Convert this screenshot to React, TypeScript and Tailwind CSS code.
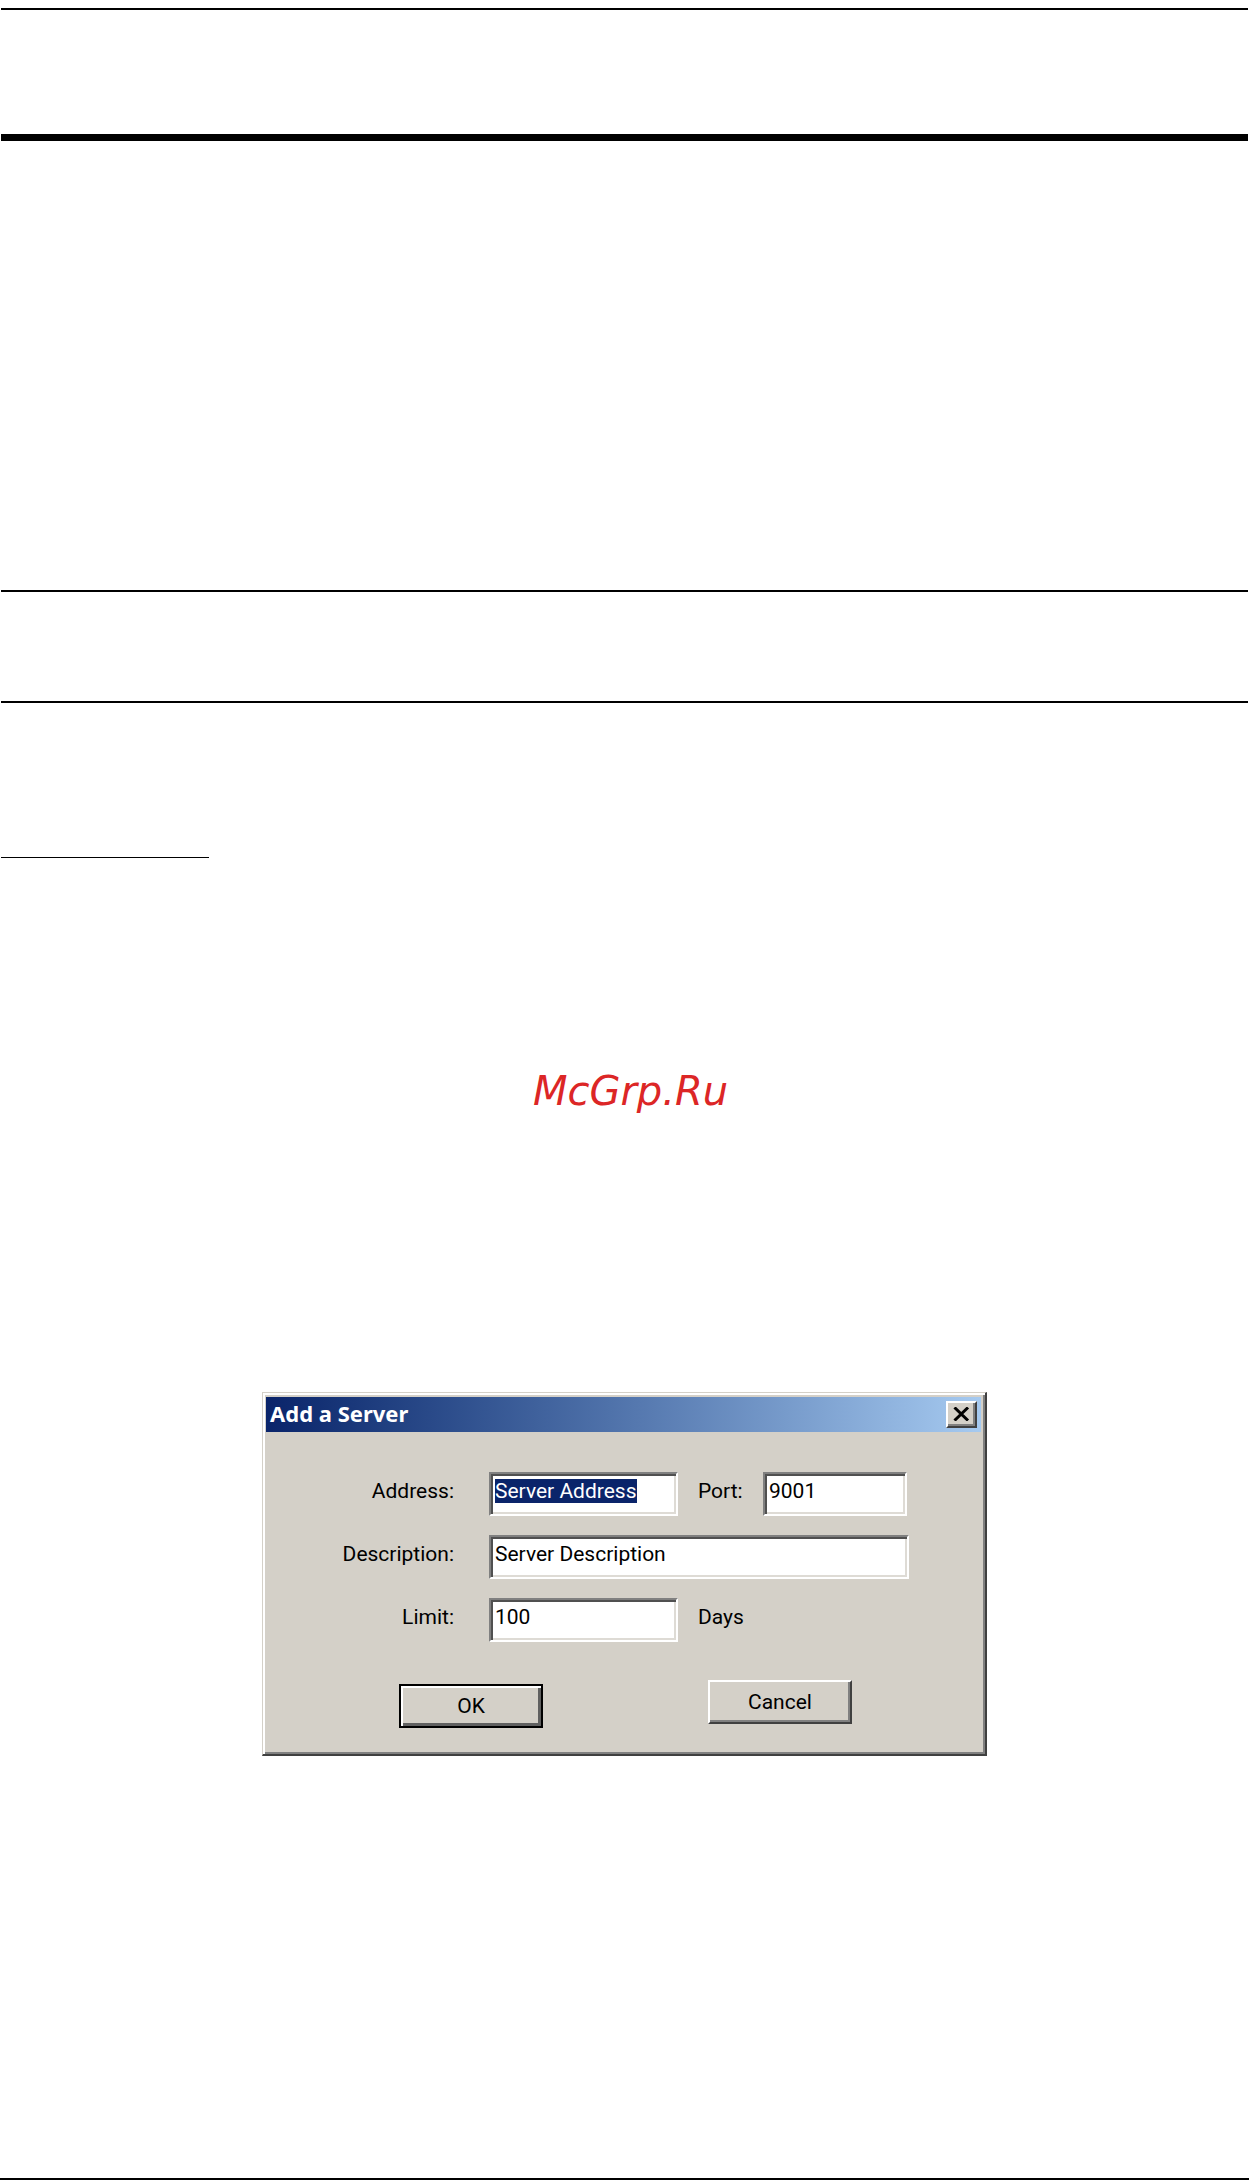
import React, { useEffect, useRef, useState } from "react";

interface FieldProps {
  id: string;
  value: string;
  onChange: (value: string) => void;
  width: string;
  inputRef?: React.Ref<HTMLInputElement>;
}

function Field({ id, value, onChange, width, inputRef }: FieldProps) {
  return (
    <input
      id={id}
      ref={inputRef}
      type="text"
      value={value}
      onChange={(e) => onChange(e.target.value)}
      className={`${width} h-11 border-2 border-t-[#808080] border-l-[#808080] border-r-white border-b-white bg-white pt-[5px] pr-1 pb-[11px] pl-1 leading-6 text-black shadow-[inset_2px_2px_0_#505050,inset_-2px_-2px_0_#dedbd5] caret-transparent outline-none selection:bg-[#0a246a] selection:text-white`}
    />
  );
}

export default function App() {
  const [address, setAddress] = useState("Server Address");
  const [port, setPort] = useState("9001");
  const [description, setDescription] = useState("Server Description");
  const [limit, setLimit] = useState("100");
  const addressRef = useRef<HTMLInputElement>(null);

  useEffect(() => {
    addressRef.current?.focus();
    addressRef.current?.select();
  }, []);

  const labelClass = "w-[188px] shrink-0 mr-[35px] pt-[7px] text-right";

  return (
    <div className="flex min-h-screen flex-col bg-white">
      <main className="px-px pt-2">
        <hr className="border-t-2 border-black" />
        <hr className="mt-[124px] border-t-[7px] border-black" />
        <hr className="mt-[449px] border-t-2 border-black" />
        <hr className="mt-[109px] border-t-2 border-black" />
        <hr className="mt-[154px] w-[208px] border-black" />

        <p className="mt-[209px] pl-3 text-center font-['DejaVu_Sans',sans-serif] text-[40px] leading-[48px] text-[#dc2626] italic">
          McGrp.Ru
        </p>

        {/* Dialog */}
        <section
          role="dialog"
          aria-labelledby="dialog-title"
          className="mx-auto mt-[277px] w-full max-w-[725px] border-t border-r-2 border-b-2 border-l border-t-[#d4d0c8] border-r-[#404040] border-b-[#404040] border-l-[#d4d0c8] bg-[#d4d0c8] pt-1 pr-1 pb-1 pl-[3px] font-[Roboto,sans-serif] text-[21px] leading-6 text-black shadow-[inset_2px_2px_0_#fff,inset_-2px_-2px_0_#808080]"
        >
          <header className="flex h-[35px] items-start justify-between bg-linear-to-r from-[#0a246a] to-[#a6caf0] p-1">
            <h1
              id="dialog-title"
              className="font-['Noto_Sans',sans-serif] text-[22px] leading-6 font-bold text-white"
            >
              Add a Server
            </h1>
            <button
              type="button"
              aria-label="Close"
              className="flex h-[27px] w-[31px] items-center justify-center border-2 border-t-white border-r-[#404040] border-b-[#404040] border-l-white bg-[#d4d0c8] pr-px pb-px shadow-[inset_-2px_-2px_0_#808080]"
            >
              <svg width="17" height="14" viewBox="0 0 17 14" stroke="#000" strokeWidth="3">
                <path d="M1.5 0.5 15 13.5M15 0.5 1.5 13.5" />
              </svg>
            </button>
          </header>

          <form className="pt-10 pb-[22px]" onSubmit={(e) => e.preventDefault()}>
            <div className="flex flex-col gap-[19px]">
              <div className="flex">
                <label htmlFor="address" className={labelClass}>Address:</label>
                <Field
                  id="address"
                  value={address}
                  onChange={setAddress}
                  width="w-[189px]"
                  inputRef={addressRef}
                />
                <label htmlFor="port" className="ml-5 w-[65px] pt-[7px]">Port:</label>
                <Field id="port" value={port} onChange={setPort} width="w-36" />
              </div>
              <div className="flex">
                <label htmlFor="description" className={labelClass}>Description:</label>
                <Field
                  id="description"
                  value={description}
                  onChange={setDescription}
                  width="w-[420px]"
                />
              </div>
              <div className="flex">
                <label htmlFor="limit" className={labelClass}>Limit:</label>
                <Field id="limit" value={limit} onChange={setLimit} width="w-[189px]" />
                <span className="ml-5 pt-[7px]">Days</span>
              </div>
            </div>

            {/* Actions */}
            <div className="mt-[38px] flex h-12 gap-[165px] pl-[133px]">
              <button
                type="submit"
                className="h-11 w-36 self-end border-2 border-black bg-[#d4d0c8] shadow-[inset_2px_2px_0_#fff,inset_-3px_-3px_0_#606060]"
              >
                OK
              </button>
              <button
                type="button"
                className="h-11 w-36 self-start border-2 border-t-white border-r-[#404040] border-b-[#404040] border-l-white bg-[#d4d0c8] shadow-[inset_-2px_-2px_0_#808080]"
              >
                Cancel
              </button>
            </div>
          </form>
        </section>
      </main>

      <hr className="mt-auto border-t-2 border-black" />
    </div>
  );
}
